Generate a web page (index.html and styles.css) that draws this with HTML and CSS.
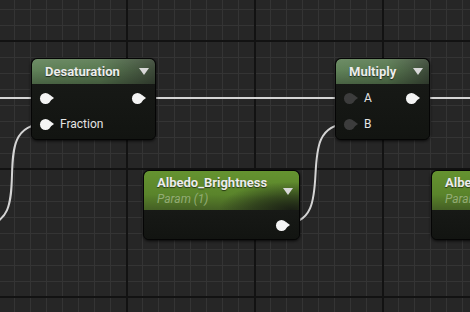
FILE: index.html
```html
<!DOCTYPE html>
<html lang="en">
<head>
  <meta charset="UTF-8" />
  <title>Material Graph</title>
  <link rel="stylesheet" href="styles.css">
</head>
<body>
  <div class="graph">
    <svg class="wires" width="470" height="312" viewBox="0 0 470 312">
      <path d="M 0 98 L 46 98" />
      <path d="M 138 98 L 349 98" />
      <path d="M 412 98 L 470 98" />
      <path d="M 45 124 C -18 124, 42 226, -21 226" />
      <path d="M 283 224 C 343 224, 288 124, 348 124" />
    </svg>

    <!-- Desaturation -->
    <div class="node node-desat">
      <div class="node-head">
        <span class="node-title">Desaturation</span>
        <span class="caret"></span>
      </div>
      <div class="node-body">
        <div class="pin-row">
          <span class="pin"></span>
          <span class="pin"></span>
        </div>
        <div class="pin-row">
          <span class="pin"></span>
          <span class="pin-label">Fraction</span>
        </div>
      </div>
    </div>

    <!-- Multiply -->
    <div class="node node-mul">
      <div class="node-head">
        <span class="node-title">Multiply</span>
        <span class="caret"></span>
      </div>
      <div class="node-body">
        <div class="pin-row">
          <span class="pin pin-off"></span>
          <span class="pin-label">A</span>
          <span class="pin"></span>
        </div>
        <div class="pin-row">
          <span class="pin pin-off"></span>
          <span class="pin-label">B</span>
        </div>
      </div>
    </div>

    <!-- Scalar parameters -->
    <div class="node param node-albedo">
      <div class="node-head">
        <div class="head-text">
          <span class="node-title">Albedo_Brightness</span>
          <span class="node-sub">Param (1)</span>
        </div>
        <span class="caret"></span>
      </div>
      <div class="node-body">
        <div class="pin-row">
          <span class="pin"></span>
        </div>
      </div>
    </div>

    <div class="node param node-albedo2">
      <div class="node-head">
        <div class="head-text">
          <span class="node-title">Albedo_Brightness</span>
          <span class="node-sub">Param (1)</span>
        </div>
      </div>
      <div class="node-body">
        <div class="pin-row"></div>
      </div>
    </div>
  </div>
</body>
</html>
```

FILE: styles.css
```css
* { box-sizing: border-box; }
html, body {
  margin: 0;
  padding: 0;
  background: #262626;
}
.graph {
  position: relative;
  width: 470px;
  height: 312px;
  overflow: hidden;
  font-family: Roboto, "Open Sans", sans-serif;
  background-color: #262626;
  background-image:
    linear-gradient(to right, #121212 2px, transparent 2px),
    linear-gradient(to bottom, #121212 2px, transparent 2px),
    linear-gradient(to right, #343434 1px, transparent 1px),
    linear-gradient(to bottom, #343434 1px, transparent 1px);
  background-size: 128px 128px, 128px 128px, 16px 16px, 16px 16px;
  background-position: 126px 0, 0 40px, 14px 0, 0 9px;
}
.wires {
  position: absolute;
  left: 0;
  top: 0;
}
.wires path {
  fill: none;
  stroke: #d4d4d4;
  stroke-width: 2;
}

/* nodes */
.node {
  position: absolute;
  display: flex;
  flex-direction: column;
  border: 1px solid #050505;
  border-radius: 6px;
  background: #151714;
  box-shadow: 0 1px 3px rgba(0,0,0,0.8);
  overflow: hidden;
}
.node-desat { left: 31px; top: 58px; width: 125px; height: 82px; }
.node-mul { left: 335px; top: 58px; width: 95px; height: 82px; }
.node-albedo { left: 143px; top: 170px; width: 157px; height: 70px; }
.node-albedo2 { left: 431px; top: 170px; width: 157px; height: 70px; }

.node-head {
  display: flex;
  align-items: center;
  justify-content: space-between;
  height: 25px;
  padding: 0 6px 0 13px;
  border-radius: 5px 5px 0 0;
  background:
    linear-gradient(to bottom, rgba(255,255,255,0.08), rgba(0,0,0,0) 40%, rgba(0,0,0,0.25)),
    linear-gradient(to right, #62845a 0%, #5a7a52 55%, #3d4a39 100%);
}
.node-title {
  color: #ececec;
  font-size: 13px;
  font-weight: bold;
  text-shadow: 0 1px 1px rgba(0,0,0,0.6);
}
.caret {
  width: 0;
  height: 0;
  border-left: 5.5px solid transparent;
  border-right: 5.5px solid transparent;
  border-top: 7px solid #d8d8d8;
}

.param .node-head {
  height: 39px;
  padding-top: 1px;
  background:
    radial-gradient(ellipse 55% 85% at 95% 100%, rgba(24,28,20,0.95), rgba(24,28,20,0.5) 45%, rgba(24,28,20,0) 85%),
    linear-gradient(to bottom, #659330 0%, #5a842b 60%, #445f24 100%);
}
.head-text {
  display: flex;
  flex-direction: column;
}
.head-text .node-title { line-height: 16px; }
.node-sub {
  color: #93ac75;
  font-size: 12px;
  font-style: italic;
  line-height: 16px;
}

.node-body {
  flex: 1;
  padding: 1px 0 0;
  background: linear-gradient(to bottom, #171916, #121411);
}
.pin-row {
  display: flex;
  align-items: center;
  height: 26px;
  padding: 0 9px 0 8px;
}
.param .pin-row {
  height: 28px;
  justify-content: flex-end;
}
.pin-row .pin:last-child:not(:first-child) { margin-left: auto; }
.pin {
  display: inline-flex;
  align-items: center;
}
.pin::before {
  content: "";
  width: 11px;
  height: 11px;
  border-radius: 50%;
  background: #f4f4f4;
}
.pin::after {
  content: "";
  margin-left: -1px;
  border-left: 4px solid #f4f4f4;
  border-top: 3px solid transparent;
  border-bottom: 3px solid transparent;
}
.pin-off::before { background: #3c3c3c; }
.pin-off::after { border-left-color: #3c3c3c; }
.pin-label {
  margin-left: 6px;
  color: #e4e4e4;
  font-size: 12px;
}
```
